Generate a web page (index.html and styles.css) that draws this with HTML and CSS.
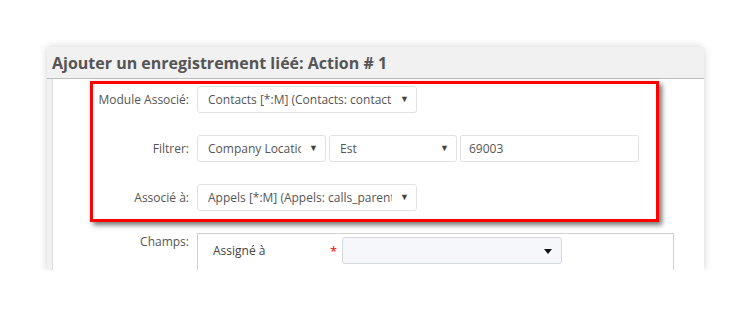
FILE: index.html
```html
<!DOCTYPE html>
<html lang="fr">
<head>
    <meta charset="UTF-8">
    <meta name="viewport" content="width=device-width, initial-scale=1.0">
    <title>Ajouter un enregistrement lié</title>
    <link rel="stylesheet" href="styles.css">
</head>
<body>
    <div class="panel">
        <h2 class="panel-title">Ajouter un enregistrement liéé: Action # 1</h2>

        <div class="panel-body">
            <div class="form-grid">
                <label class="form-label">Module Associé:</label>
                <div class="form-controls">
                    <div class="select-wrap w-220">
                        <select><option>Contacts [*:M] (Contacts: contacts)</option></select>
                    </div>
                </div>

                <label class="form-label">Filtrer:</label>
                <div class="form-controls">
                    <div class="select-wrap w-129">
                        <select><option>Company Location</option></select>
                    </div>
                    <div class="select-wrap w-128">
                        <select><option>Est</option></select>
                    </div>
                    <input class="text-input" type="text" value="69003">
                </div>

                <label class="form-label">Associé à:</label>
                <div class="form-controls">
                    <div class="select-wrap w-220">
                        <select><option>Appels [*:M] (Appels: calls_parent)</option></select>
                    </div>
                </div>

                <label class="form-label label-top">Champs:</label>
                <div class="fields-box">
                    <div class="field-row">
                        <span class="field-name">Assigné à</span>
                        <span class="required">*</span>
                        <div class="combo">
                            <span class="caret"></span>
                        </div>
                    </div>
                </div>
            </div>

            <!-- highlight frame drawn over the first rows -->
            <div class="highlight"></div>
        </div>
    </div>
</body>
</html>
```

FILE: styles.css
```css
/* Global Styles */
body {
    font-family: 'Open Sans', 'Liberation Sans', sans-serif;
    background-color: #ffffff;
    margin: 0;
    padding: 0;
    color: #555;
}

.panel {
    margin: 47px 0 0 47px;
    width: 657px;
    height: 223px;
    overflow: hidden;
    background-color: #f1f1f1;
    border-radius: 2px 5px 0 0;
    box-shadow: 0 0 8px rgba(0, 0, 0, 0.18);
}

.panel-title {
    margin: 0;
    height: 31px;
    line-height: 33px;
    padding-left: 5px;
    font-size: 16px;
    font-weight: 700;
    color: #555;
    border-bottom: 1px solid #bdbdbd;
    white-space: nowrap;
}

.panel-body {
    position: relative;
    margin-left: 5px;
    height: 200px;
    background-color: #ffffff;
    border-left: 1px solid #dcdcdc;
    padding-top: 7px;
}

.form-grid {
    display: grid;
    grid-template-columns: 136px 1fr;
    column-gap: 8px;
    row-gap: 22px;
    grid-auto-rows: 27px;
}

.form-label {
    font-size: 12px;
    text-align: right;
    line-height: 27px;
    color: #555;
}

.label-top {
    line-height: 18px;
}

.form-controls {
    display: flex;
    gap: 3px;
}

.select-wrap {
    position: relative;
    height: 27px;
}

.select-wrap::after {
    content: "\25BC";
    position: absolute;
    right: 8px;
    top: 6px;
    font-size: 9px;
    color: #444;
    pointer-events: none;
}

.select-wrap select {
    appearance: none;
    -webkit-appearance: none;
    width: 100%;
    height: 27px;
    box-sizing: border-box;
    padding: 0 24px 0 10px;
    font-family: 'Open Sans', 'Liberation Sans', sans-serif;
    font-size: 12px;
    color: #555;
    background-color: #ffffff;
    border: 1px solid #e2e2e2;
    border-radius: 3px;
    outline: none;
}

.w-220 { width: 220px; }
.w-129 { width: 129px; }
.w-128 { width: 128px; }

.text-input {
    width: 179px;
    height: 27px;
    box-sizing: border-box;
    padding: 0 8px;
    font-family: 'Open Sans', 'Liberation Sans', sans-serif;
    font-size: 12px;
    color: #555;
    border: 1px solid #e2e2e2;
    border-radius: 2px;
    outline: none;
}

.fields-box {
    width: 477px;
    height: 60px;
    box-sizing: border-box;
    border: 1px solid #cfcfcf;
    padding: 3px 0 0 15px;
}

.field-row {
    display: flex;
    align-items: center;
    height: 27px;
}

.field-name {
    font-size: 12px;
    color: #444;
    width: 117px;
}

.required {
    color: #e00;
    font-size: 13px;
    width: 12px;
}

.combo {
    position: relative;
    width: 220px;
    height: 27px;
    box-sizing: border-box;
    background-color: #f5f7fb;
    border: 1px solid #d3d7de;
    border-radius: 3px;
}

.caret {
    position: absolute;
    right: 9px;
    top: 11px;
    width: 0;
    height: 0;
    border-left: 4px solid transparent;
    border-right: 4px solid transparent;
    border-top: 5px solid #111;
}

/* red highlight annotation */
.highlight {
    position: absolute;
    left: 37px;
    top: 2px;
    width: 563px;
    height: 135px;
    border: 3px solid #ff0000;
    box-shadow: 3px 3px 5px rgba(0, 0, 0, 0.55);
    pointer-events: none;
}
```
